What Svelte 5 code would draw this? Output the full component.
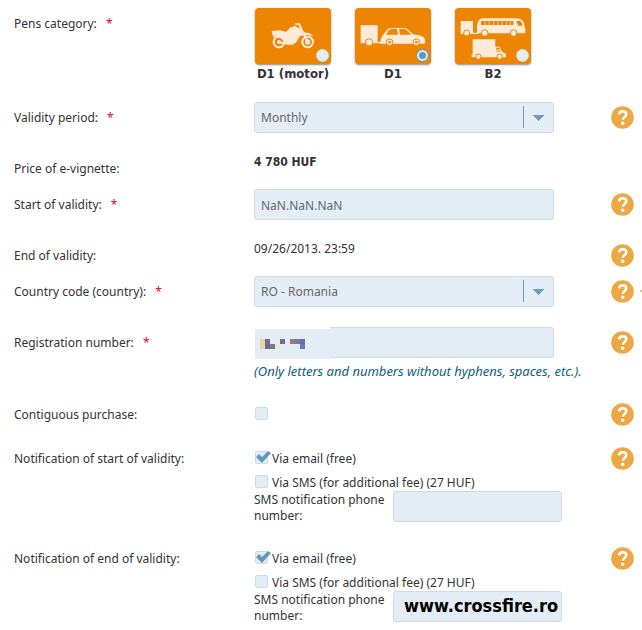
<script>
  let category = $state('d1');
  let period = $state('Monthly');
  let country = $state('RO - Romania');
  let start = $state('NaN.NaN.NaN');
  let plate = $state('');
  let contiguous = $state(false);

  let notifications = $state([
    { id: 'start', title: 'Notification of start of validity:', email: true, sms: false, phone: '' },
    { id: 'end', title: 'Notification of end of validity:', email: true, sms: false, phone: 'www.crossfire.ro' },
  ]);

  const categories = [
    { id: 'motor', name: 'D1 (motor)' },
    { id: 'd1', name: 'D1' },
    { id: 'b2', name: 'B2' },
  ];

  const mosaic = [
    [0, 0, '#e3d5ae'], [0, 1, '#e3d5ae'], [1, 0, '#7a6796'], [1, 1, '#7c6580'],
    [2, 1, '#77798f'], [3, 1, '#e6edc6'], [4, 0, '#7a6796'], [6, 0, '#a97864'],
    [7, 0, '#667db8'], [8, 0, '#7a6796'], [8, 1, '#667db8'],
  ];
</script>

{#snippet help(topic)}
  <button class="help" type="button" aria-label="Help: {topic}">
    <svg viewBox="0 0 23 23" aria-hidden="true">
      <circle cx="11.5" cy="11.5" r="11.3" fill="#eba845" />
      <path d="M8 8.400C8.300 6.300 9.700 5.300 11.600 5.300c2.200 0 3.700 1.100 3.700 3 0 2.600-3.400 2.600-3.400 5.500" fill="none" stroke="#fff" stroke-width="2.500" />
      <circle cx="11.700" cy="17.300" r="1.700" fill="#fff" />
    </svg>
  </button>
{/snippet}

{#snippet arrow()}
  <svg class="arrow" viewBox="0 0 30 31" shape-rendering="crispEdges" aria-hidden="true">
    <path d="M0 4h1v22H0z M10 13h11l-5.500 6z" fill="#6c9fbd" />
  </svg>
{/snippet}

<form class="form">
  <div class="row">
    <span class="title" id="category-title">Pens category: <b class="req">*</b></span>
    <div class="cards" role="radiogroup" aria-labelledby="category-title">
      {#each categories as { id, name }}
        <label class="category">
          <span class="card">
            <svg viewBox="29 24 228 168" fill="#fdead8" aria-hidden="true">
              {#if id === 'motor'}
                <g fill="none" stroke="#fdead8">
                  <circle cx="101" cy="126" r="16" stroke-width="6" />
                  <circle cx="187" cy="126" r="16" stroke-width="6" />
                  <path d="M150 72l12 1 6 14 19 38M164 90l-20-9" stroke-width="6" />
                  <path d="M98 127l30 4h16" stroke-width="6" />
                </g>
                <circle cx="187" cy="126" r="8" />
                <circle cx="101" cy="126" r="6" />
                <path d="M79 93l25-2 18 5 14-14 14-3 16 8 5 12-12 17-8 14-22 3-16-12-14-12-16-1-3-9z" />
                <path d="M158 100l13-4 20 3 15 9-20-3-20 3z" />
                <path d="M82 112l10-8 22 2 10 12-18-4z" />
              {:else if id === 'd1'}
                <path d="M46 76h51v50h10v4H46z" />
                <path d="M104 127l5-17 13-17q6-9 15-9h38q7 0 12 4l16 15q30 3 35 13l2 12-4 3H104z" />
                <path d="M122 104l9-14q3-3 8-3h16l3 17zM161 87h16q5 0 9 5l12 12h-34z" fill="#ed8500" />
                <g stroke="#ed8500" stroke-width="3">
                  <circle cx="71" cy="127" r="11" />
                  <circle cx="133" cy="127" r="10" />
                  <circle cx="213" cy="127" r="10" />
                </g>
                <circle cx="133" cy="127" r="4" fill="#ed8500" />
                <circle cx="213" cy="127" r="4" fill="#ed8500" />
              {:else}
                <path d="M46 63h37v35h16v4H46z" />
                <path d="M95 100V77q3-22 18-22h98q20 0 25 15l4 18v12z" />
                <path d="M107 63h97v12h-97zM213 63h12q5 4 6 14h-12z" fill="#ed8500" />
                <path d="M119 62v14M132 62v14M145 62v14M158 62v14M171 62v14M184 62v14M195 62v14" stroke="#fdead8" stroke-width="2" />
                <path d="M82 118h68v22h12l9 16 11 5v11H79v-9h3z" />
                <path d="M153 143h7l6 12h-13z" fill="#ed8500" />
                <path d="M151 151h12" stroke="#fdead8" stroke-width="3" />
                <g stroke="#ed8500" stroke-width="3">
                  <circle cx="64" cy="99" r="9" />
                  <circle cx="118" cy="99" r="10" />
                  <circle cx="205" cy="99" r="10" />
                  <circle cx="99" cy="170" r="8" />
                  <circle cx="163" cy="170" r="8" />
                </g>
              {/if}
            </svg>
            <input type="radio" name="category" value={id} bind:group={category} />
          </span>
          {name}
        </label>
      {/each}
    </div>
  </div>

  <div class="row">
    <label class="title" for="period">Validity period: <b class="req">*</b></label>
    <div class="field">
      <select id="period" bind:value={period}>
        <option>Monthly</option>
      </select>
      {@render arrow()}
    </div>
    {@render help('validity period')}
  </div>

  <div class="row text">
    <span class="title">Price of e-vignette:</span>
    <strong class="value">4 780 HUF</strong>
  </div>

  <div class="row">
    <label class="title" for="from">Start of validity: <b class="req">*</b></label>
    <div class="field"><input id="from" type="text" bind:value={start} /></div>
    {@render help('start of validity')}
  </div>

  <div class="row text">
    <span class="title">End of validity:</span>
    <span class="value">09/26/2013. 23:59</span>
    {@render help('end of validity')}
  </div>

  <div class="row marked">
    <label class="title" for="country">Country code (country): <b class="req">*</b></label>
    <div class="field">
      <select id="country" bind:value={country}>
        <option>RO - Romania</option>
      </select>
      {@render arrow()}
    </div>
    {@render help('country code')}
  </div>

  <div class="row">
    <label class="title" for="plate">Registration number: <b class="req">*</b></label>
    <div>
      <div class="field">
        <input id="plate" type="text" bind:value={plate} />
        <svg class="mosaic" viewBox="0 0 76 32" shape-rendering="crispEdges" aria-hidden="true">
          <rect width="76" height="32" fill="#fff" />
          <rect x="1" y="2" width="75" height="30" fill="#e4edf5" />
          {#each mosaic as [x, y, color]}
            <rect x={6 + x * 5} y={12 + y * 5} width="5" height="5" fill={color} />
          {/each}
        </svg>
      </div>
      <p class="note">(Only letters and numbers without hyphens, spaces, etc.).</p>
    </div>
    {@render help('registration number')}
  </div>

  <div class="row single">
    <label class="title" for="contiguous">Contiguous purchase:</label>
    <div class="checks"><input id="contiguous" type="checkbox" bind:checked={contiguous} /></div>
    {@render help('contiguous purchase')}
  </div>

  {#each notifications as item}
    <div class="row">
      <span class="title">{item.title}</span>
      <div>
        <div class="checks">
          <label class="check">
            <input type="checkbox" bind:checked={item.email} />
            {#if item.email}
              <svg class="tick" viewBox="0 0 16 14" aria-hidden="true">
                <path d="M1 7l3-3 3 3 6-6 3 2-9 10z" fill="#5f9abc" />
              </svg>
            {/if}
            Via email (free)
          </label>
          <label class="check">
            <input type="checkbox" bind:checked={item.sms} />
            Via SMS (for additional fee) (27 HUF)
          </label>
        </div>
        <div class="phone">
          <label for="phone-{item.id}">SMS notification phone number:</label>
          <input id="phone-{item.id}" type="text" class:big={item.phone} bind:value={item.phone} />
        </div>
      </div>
      {@render help(item.title)}
    </div>
  {/each}
</form>

<style>
  :global(body) {
    background: #fff;
  }

  .form {
    padding: 8px 8px 0 14px;
    font-family: "Noto Sans", "Open Sans", sans-serif;
    font-size: 12px;
    line-height: 16px;
    color: #333;
  }

  .row {
    display: grid;
    grid-template-columns: 240px 1fr 23px;
    align-items: start;
    padding-bottom: 20px;
  }
  .row.text {
    padding-bottom: 5px;
  }
  .row.single {
    padding-bottom: 13px;
  }
  .row.marked {
    position: relative;
  }
  .row.marked::after {
    content: '';
    position: absolute;
    top: 14px;
    right: -8px;
    width: 2px;
    height: 2px;
    background: #f0c078;
  }

  .title {
    line-height: 31px;
  }
  .req {
    margin-left: 6px;
    font-weight: normal;
    color: #e2001a;
  }

  .cards {
    display: flex;
    gap: 24px;
    padding-left: 1px;
  }
  .category {
    width: 76px;
    height: 74px;
    font-family: "DejaVu Sans Condensed", "DejaVu Sans", sans-serif;
    font-size: 13px;
    font-weight: bold;
    text-align: center;
    white-space: nowrap;
  }
  .card {
    display: block;
    position: relative;
    height: 56px;
    margin-bottom: 2px;
    border-radius: 4px;
    background: #ed8500;
    box-shadow: 0 1px 2px #888;
  }
  .card svg {
    display: block;
    width: 76px;
    height: 56px;
  }

  input,
  select {
    appearance: none;
    box-sizing: border-box;
    margin: 0;
    border: 1px solid #c8dde9;
    background: #e4edf5;
  }
  input[type='text'],
  select {
    width: 100%;
    height: 31px;
    padding: 1px 6px 0;
    border-radius: 3px;
    font: inherit;
    color: #666;
  }
  input[type='radio'] {
    position: absolute;
    right: 2px;
    bottom: 2px;
    width: 13px;
    height: 13px;
    border-radius: 50%;
  }
  input[type='radio']:checked {
    border-color: #6c9fbd;
    background: #5f9abc;
    box-shadow: inset 0 0 0 2px #e4edf5;
  }
  input[type='checkbox'] {
    display: block;
    flex: none;
    width: 13px;
    height: 13px;
    border-radius: 2px;
  }

  .field {
    position: relative;
    max-width: 300px;
  }
  .arrow {
    position: absolute;
    top: 0;
    right: 1px;
    width: 30px;
    height: 31px;
    pointer-events: none;
  }
  .mosaic {
    position: absolute;
    top: 0;
    left: 0;
    width: 76px;
    height: 32px;
    pointer-events: none;
  }

  .value {
    padding-top: 1px;
  }
  strong {
    font-family: "DejaVu Sans Condensed", "DejaVu Sans", sans-serif;
  }
  .note {
    margin: 5px 0 0;
    font-size: 13px;
    font-style: italic;
    color: #0b6085;
    white-space: nowrap;
  }

  .checks {
    display: flex;
    flex-direction: column;
    gap: 8px;
    padding: 8px 0 0 1px;
  }
  .check {
    position: relative;
    display: flex;
    gap: 4px;
  }
  .tick {
    position: absolute;
    left: 0;
    top: -1px;
    width: 16px;
    height: 14px;
  }
  .phone {
    display: flex;
    align-items: flex-start;
    height: 32px;
  }
  .phone label {
    width: 139px;
    padding-top: 1px;
  }
  .phone input[type='text'] {
    width: 169px;
  }
  .phone input.big {
    padding: 0 0 2px 10px;
    font-family: "DejaVu Sans Condensed", "DejaVu Sans", sans-serif;
    font-size: 18px;
    font-weight: bold;
    color: #000;
  }

  .help {
    grid-column: 3;
    width: 23px;
    height: 23px;
    margin-top: 4px;
    padding: 0;
    border: 0;
    background: none;
    cursor: pointer;
  }
  .help svg {
    display: block;
  }
</style>
